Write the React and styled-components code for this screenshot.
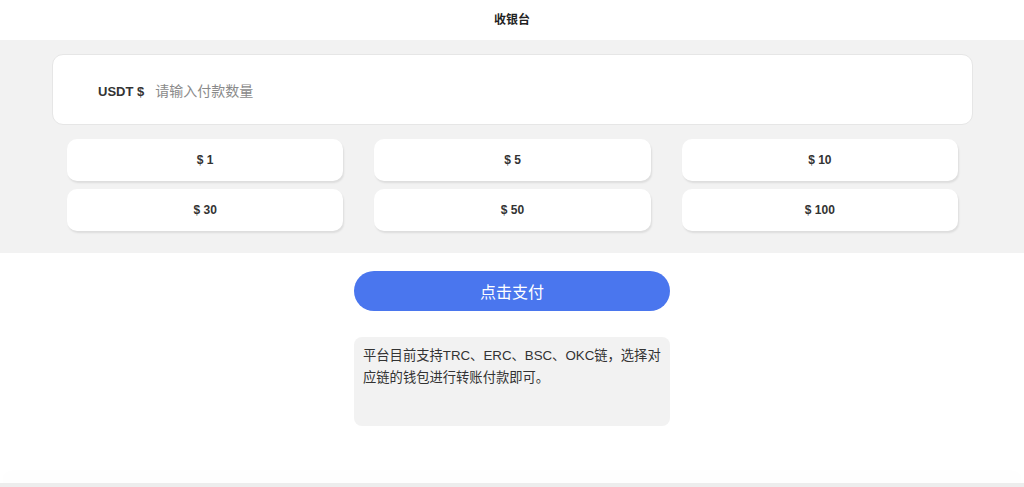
import React from 'react';
import styled, { createGlobalStyle } from 'styled-components';

const GlobalStyle = createGlobalStyle`
    html, body {
        margin: 0;
        padding: 0;
        background-color: #ffffff;
        font-family: "Liberation Sans", Arial, "Noto Sans CJK SC", sans-serif;
        color: #333333;
    }
    * {
        box-sizing: border-box;
    }
`;

const Page = styled.div`
    display: flex;
    flex-direction: column;
    min-height: 487px;
`;

const Header = styled.div`
    height: 40px;
    padding-bottom: 3px;
    display: flex;
    align-items: center;
    justify-content: center;
    font-size: 12px;
    font-weight: bold;
    color: #222222;
`;

const AmountSection = styled.div`
    background-color: #f2f2f2;
    padding: 14px 51px 22px 52px;
    display: flex;
    flex-direction: column;
    gap: 14px;
`;

const InputCard = styled.label`
    height: 71px;
    background-color: #ffffff;
    border: 1px solid #e6e6e6;
    border-radius: 11px;
    display: flex;
    align-items: center;
    padding: 3px 0 0 45px;
    gap: 11px;
`;

const Currency = styled.span`
    font-size: 13px;
    font-weight: bold;
    color: #333333;
`;

const AmountInput = styled.input`
    flex: 1;
    border: none;
    outline: none;
    background: transparent;
    font-family: inherit;
    font-size: 14px;
    color: #333333;
    padding: 0;
    &::placeholder {
        color: #8a8a8a;
    }
`;

const PresetGrid = styled.div`
    display: grid;
    grid-template-columns: repeat(3, 1fr);
    column-gap: 31px;
    row-gap: 8px;
    padding: 0 15px;
`;

const PresetButton = styled.button`
    height: 42px;
    border: none;
    border-radius: 10px;
    background-color: #ffffff;
    box-shadow: 1px 2px 2px rgba(0, 0, 0, 0.09);
    font-family: inherit;
    font-size: 12px;
    font-weight: bold;
    color: ${props => props.$active ? '#4a76ee' : '#333333'};
    cursor: pointer;
`;

const Actions = styled.div`
    display: flex;
    flex-direction: column;
    align-items: center;
    padding-top: 18px;
    gap: 26px;
`;

const PayButton = styled.button`
    width: 316px;
    height: 40px;
    border: none;
    border-radius: 20px;
    background-color: #4a76ee;
    color: #ffffff;
    font-family: inherit;
    font-size: 16px;
    cursor: pointer;
`;

const Notice = styled.div`
    width: 316px;
    height: 89px;
    background-color: #f2f2f2;
    border-radius: 8px;
    padding: 8px 9px;
    font-size: 13.3px;
    line-height: 22px;
    color: #333333;
`;

const Footer = styled.div`
    position: fixed;
    left: 0;
    right: 0;
    bottom: 0;
    height: 4px;
    background-color: #ededed;
    box-shadow: 0 -6px 18px rgba(0, 0, 0, 0.035);
`;

const presets = [1, 5, 10, 30, 50, 100];

export default function App() {
    const [amount, setAmount] = React.useState('');

    return (
        <Page>
            <GlobalStyle />
            <Header>收银台</Header>
            <AmountSection>
                <InputCard>
                    <Currency>USDT $</Currency>
                    <AmountInput
                        placeholder="请输入付款数量"
                        value={amount}
                        onChange={e => setAmount(e.target.value)}
                    />
                </InputCard>
                <PresetGrid>
                    {presets.map(p => (
                        <PresetButton
                            key={p}
                            $active={String(p) === amount}
                            onClick={() => setAmount(String(p))}
                        >
                            $ {p}
                        </PresetButton>
                    ))}
                </PresetGrid>
            </AmountSection>
            <Actions>
                <PayButton>点击支付</PayButton>
                <Notice>平台目前支持TRC、ERC、BSC、OKC链，选择对应链的钱包进行转账付款即可。</Notice>
            </Actions>
            <Footer />
        </Page>
    );
}
